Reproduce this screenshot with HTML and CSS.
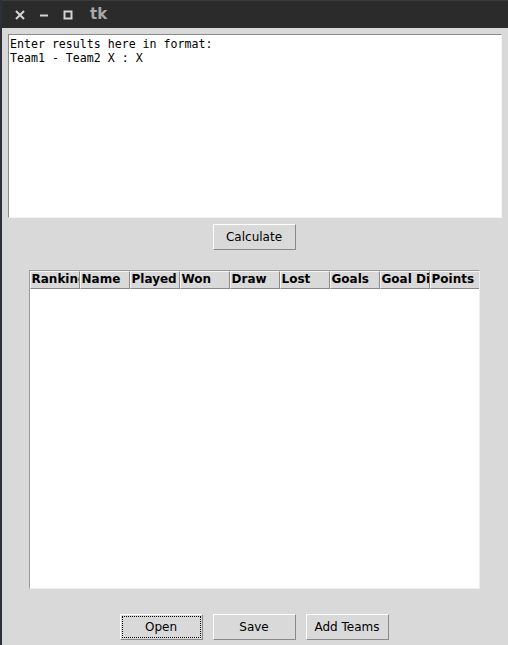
FILE: index.html
```html
<!DOCTYPE html>
<html>
<head>
<meta charset="utf-8">
<link rel="stylesheet" href="styles.css">
</head>
<body>
<div class="screen">
  <div class="desk-edge"></div>
  <div class="window">
    <div class="titlebar">
      <svg class="tb-icon" width="12" height="12" viewBox="0 0 12 12"><path d="M2 2 L10 10 M10 2 L2 10" stroke="#d4d4d4" stroke-width="2"/></svg>
      <svg class="tb-icon" width="12" height="12" viewBox="0 0 12 12"><path d="M2 6.5 H10" stroke="#d4d4d4" stroke-width="2"/></svg>
      <svg class="tb-icon" width="12" height="12" viewBox="0 0 12 12"><rect x="2.5" y="2.5" width="7" height="7" fill="none" stroke="#d4d4d4" stroke-width="2"/></svg>
      <span class="tb-title">tk</span>
    </div>
    <div class="content">
      <div class="textbox">Enter results here in format:
Team1 - Team2 X : X</div>
      <div class="btn-row top">
        <div class="btn">Calculate</div>
      </div>
      <div class="table">
        <div class="thead">
          <div class="th">Ranking</div>
          <div class="th">Name</div>
          <div class="th">Played</div>
          <div class="th">Won</div>
          <div class="th">Draw</div>
          <div class="th">Lost</div>
          <div class="th">Goals</div>
          <div class="th">Goal Diff</div>
          <div class="th">Points</div>
        </div>
        <div class="tbody"></div>
      </div>
      <div class="btn-row bottom">
        <div class="btn focus"><span>Open</span></div>
        <div class="btn">Save</div>
        <div class="btn">Add Teams</div>
      </div>
    </div>
  </div>
</div>
</body>
</html>
```
FILE: styles.css
```css
html, body {
  margin: 0;
  padding: 0;
  width: 508px;
  height: 645px;
  overflow: hidden;
  background: #d9d9d9;
}
.screen {
  display: flex;
  width: 508px;
  height: 645px;
}
.desk-edge {
  width: 2px;
  background: #2c3038;
}
.window {
  flex: 1;
  display: flex;
  flex-direction: column;
  background: #d9d9d9;
}
.titlebar {
  height: 27px;
  background: #2b2b2b;
  border-top: 1px solid #3c3c3c;
  display: flex;
  align-items: center;
  padding-left: 12px;
  gap: 12px;
}
.tb-icon {
  display: block;
}
.tb-title {
  font-family: "DejaVu Sans", sans-serif;
  font-weight: bold;
  font-size: 15px;
  color: #a8a8a8;
  margin-left: 4px;
  margin-top: -1px;
}
.content {
  flex: 1;
  display: flex;
  flex-direction: column;
  align-items: center;
  padding: 6px 6px 0 6px;
}
.textbox {
  align-self: stretch;
  height: 180px;
  background: #ffffff;
  border-top: 1px solid #8a8a8a;
  border-left: 1px solid #8a8a8a;
  border-right: 1px solid #f4f4f4;
  border-bottom: 1px solid #f4f4f4;
  padding: 2px 1px 0 1px;
  font-family: "DejaVu Sans Mono", monospace;
  font-size: 11.6px;
  line-height: 14px;
  color: #000;
  white-space: pre;
}
.btn-row {
  display: flex;
  justify-content: center;
  gap: 10px;
  margin-right: 2px;
}
.btn-row.top {
  margin-top: 6px;
}
.btn-row.bottom {
  margin-top: 25px;
}
.btn {
  box-sizing: border-box;
  width: 83px;
  height: 26px;
  background: #d9d9d9;
  border-top: 1px solid #ffffff;
  border-left: 1px solid #ffffff;
  border-right: 1px solid #8a8a8a;
  border-bottom: 1px solid #8a8a8a;
  display: flex;
  align-items: center;
  justify-content: center;
  font-family: "DejaVu Sans", sans-serif;
  font-size: 12px;
  color: #000;
}
.btn.focus {
  padding: 1px;
}
.btn.focus span {
  flex: 1;
  align-self: stretch;
  display: flex;
  align-items: center;
  justify-content: center;
  border: 1px dotted #000;
}
.table {
  margin-top: 20px;
  margin-right: 2px;
  width: 451px;
  height: 319px;
  box-sizing: border-box;
  display: flex;
  flex-direction: column;
  background: #ffffff;
  border-top: 1px solid #9a9a9a;
  border-left: 1px solid #9a9a9a;
  border-right: 1px solid #eeeeee;
  border-bottom: 1px solid #eeeeee;
}
.thead {
  display: flex;
  height: 18px;
  overflow: hidden;
}
.th {
  flex: 0 0 50px;
  box-sizing: border-box;
  height: 18px;
  overflow: hidden;
  white-space: nowrap;
  background: #d9d9d9;
  border-top: 1px solid #f5f5f5;
  border-left: 1px solid #f5f5f5;
  border-right: 1px solid #8a8a8a;
  border-bottom: 1px solid #8a8a8a;
  padding-left: 1px;
  font-family: "DejaVu Sans", sans-serif;
  font-weight: bold;
  font-size: 12px;
  line-height: 15px;
  color: #000;
}
.tbody {
  flex: 1;
}
```
